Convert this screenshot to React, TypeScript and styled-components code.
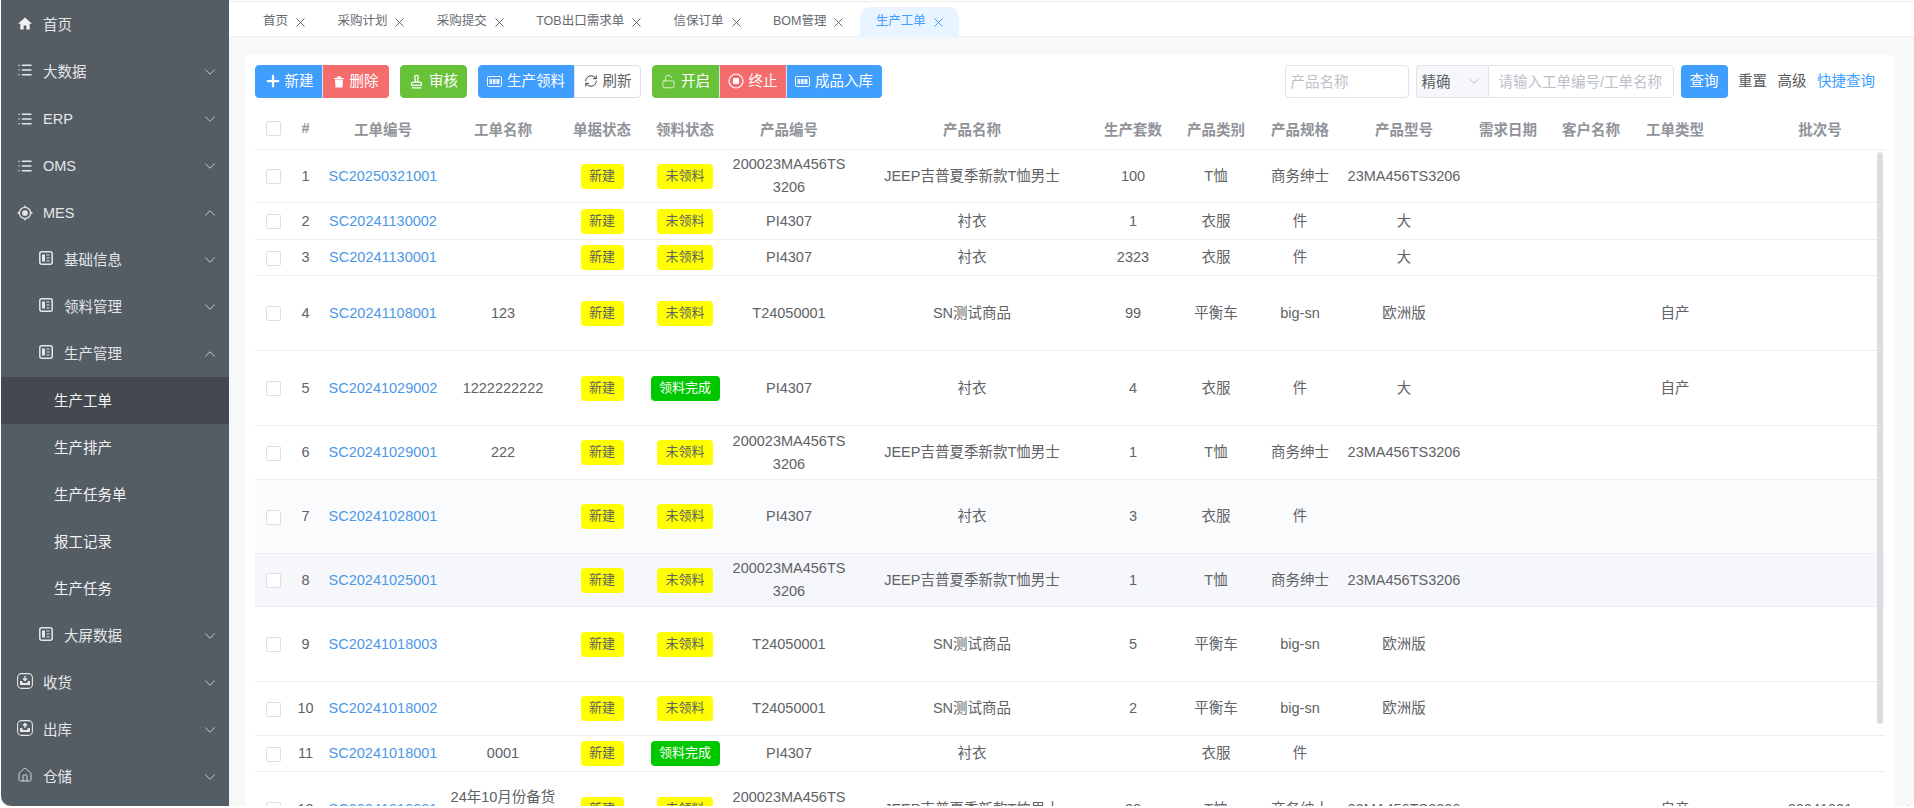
import React from 'react';
import styled, { createGlobalStyle } from 'styled-components';
import { LockOpen, RefreshCw, Home, List, ChevronDown, ChevronUp, Plus, Stamp } from 'lucide-react';

const Global = createGlobalStyle`
  html, body { margin: 0; padding: 0; background: #fff; overflow: hidden; }
  body { font-family: "Liberation Sans", "Noto Sans CJK SC", sans-serif; font-size: 14.5px; color: #606266; }
  * { box-sizing: border-box; }
`;

const Frame = styled.div`
  width: 1913px; height: 806px; margin-left: 1px; display: flex; overflow: hidden;
  border-radius: 0 0 10px 10px; box-shadow: 0 1px 0 #dcdcdc;
`;
const Sidebar = styled.nav`
  width: 228px; flex: none; background: #545c64; padding-top: 1px; color: #e4e6e8; overflow: hidden;
`;
const MenuRow = styled.div<{ $level: number; $active?: boolean; $latin?: boolean }>`
  height: 47px; display: flex; align-items: center; position: relative;
  padding-bottom: ${p => (p.$latin ? 0 : 3)}px;
  padding-left: ${p => (p.$level === 0 ? 16 : p.$level === 1 ? 37 : 53)}px;
  background: ${p => (p.$active ? '#43494f' : 'transparent')};
  color: ${p => (p.$level === 2 ? '#f2f3f4' : '#e4e6e8')};
`;
const MenuIcon = styled.span`
  width: 16px; height: 16px; margin-right: 10px; display: flex; align-items: center; justify-content: center; flex: none;
`;
const Caret = styled.span`
  position: absolute; left: 200px; top: 15px; display: flex; color: #d3d6d9;
`;
const Main = styled.main`flex: 1; min-width: 0; display: flex; flex-direction: column; background: #f7f8f8;`;
const TopLine = styled.div`height: 2px; flex: none; background: linear-gradient(#fff 50%, #ececec 50%);`;
const TabBar = styled.div`
  height: 35px; flex: none; background: #fff; border-bottom: 1px solid #eeeeee; padding: 5px 0 0 17.800px; display: flex; align-items: stretch;
`;
const Tab = styled.div<{ $active?: boolean }>`
  position: relative; display: flex; align-items: center; gap: 8px; padding: 0 16.200px 6px; height: 30px; font-size: 12.5px;
  color: ${p => (p.$active ? '#409eff' : '#666a70')};
  background: ${p => (p.$active ? '#e8f4ff' : 'transparent')};
  border-radius: ${p => (p.$active ? '10px 10px 0 0' : '0')};
  ${p => p.$active && `
    &::before, &::after { content: ''; position: absolute; bottom: 0; width: 4px; height: 5px; }
    &::before { left: -3px; background: radial-gradient(circle at 0 0, transparent 4px, #e8f4ff 4.5px); }
    &::after { right: -3px; background: radial-gradient(circle at 100% 0, transparent 4px, #e8f4ff 4.5px); }
  `}
`;
const CloseSvg = styled.svg`margin-top: 6px; flex: none;`;
const Body = styled.div`flex: 1; min-height: 0; padding: 17px 20px 0 16px; overflow: hidden;`;
const Card = styled.section`height: 100%; background: #fff; border-radius: 6px 6px 0 0; padding: 11px 9px 0 10px; overflow: hidden;`;
const Toolbar = styled.div`display: flex; align-items: center; justify-content: space-between; height: 33px; padding-right: 10px;`;
const Left = styled.div`display: flex; gap: 11px;`;
const Group = styled.div`display: flex;`;
const Btn = styled.button<{ $w: number; $bg: string; $plain?: boolean }>`
  width: ${p => p.$w}px; height: 33px; padding: 0 0 4px; border: 1px solid ${p => (p.$plain ? '#dcdfe6' : p.$bg)};
  background: ${p => p.$bg}; color: ${p => (p.$plain ? '#606266' : '#fff')};
  font: inherit; display: inline-flex; align-items: center; justify-content: center; gap: 5px;
  & + & { border-left-color: ${p => (p.$plain ? '#dcdfe6' : 'rgba(255,255,255,.45)')}; }
  &:first-child { border-radius: 4px 0 0 4px; }
  &:last-child { border-radius: 0 4px 4px 0; }
  &:only-child { border-radius: 4px; }
`;
const PlusIcon = styled(Plus)`margin-right: -2px; margin-top: 3px;`;
const Right = styled.div`display: flex; align-items: center;`;
const Field = styled.div<{ $w: number; $pl?: number; $radius?: string }>`
  width: ${p => p.$w}px; height: 33px; padding: 0 0 2px ${p => p.$pl ?? 5}px;
  border: 1px solid #dfe2e8; border-radius: ${p => p.$radius ?? '4px'}; background: #fff; color: #bcc0c8;
  display: flex; align-items: center; white-space: nowrap; overflow: hidden;
`;
const Select = styled.div`
  width: 72px; height: 33px; margin-left: 7px; padding: 0 5px 2px 5px; border: 1px solid #dfe2e8; border-right: 0;
  border-radius: 4px 0 0 4px; background: #f5f7fa; color: #606266; display: flex; align-items: center; justify-content: space-between;
`;
const Query = styled.button`
  width: 47px; height: 33px; margin-left: 7px; border: 0; border-radius: 4px; background: #409eff; color: #fff; font: inherit; padding: 0 0 4px;
`;
const TextAct = styled.span<{ $link?: boolean }>`
  margin-left: 10.500px; color: ${p => (p.$link ? '#409eff' : '#55585c')}; margin-top: -4px;
`;
const TableWrap = styled.div`position: relative; margin-top: 12px;`;
const Table = styled.table`
  width: 1630px; table-layout: fixed; border-collapse: separate; border-spacing: 0;
`;
const Th = styled.th<{ $pl?: number }>`
  height: 40px; padding: 0 0 3px ${p => p.$pl ?? 0}px; text-align: center; font-weight: 700; color: #909399; border-bottom: 1px solid #ebeef5; white-space: nowrap;
`;
const Tr = styled.tr<{ $bg?: string }>`background: ${p => p.$bg ?? '#fff'};`;
const Td = styled.td<{ $h: number; $pl?: number }>`
  height: ${p => p.$h}px; padding: 0 0 0 ${p => p.$pl ?? 0}px; text-align: center; line-height: 23px; color: #606266; border-bottom: 1px solid #ebeef5; overflow: hidden; word-break: break-all;
`;
const Check = styled.span`
  display: inline-block; width: 15px; height: 15px; border: 1px solid #dcdfe6; border-radius: 2px; background: #fff; vertical-align: middle;
`;
const Link = styled.span`color: #4d98e6; white-space: nowrap;`;
const Tag = styled.span<{ $bg: string; $fg: string; $w: number }>`
  display: inline-block; width: ${p => p.$w}px; height: 25px; line-height: 24px; border-radius: 4px; font-size: 13px; vertical-align: middle;
  background: ${p => p.$bg}; color: ${p => p.$fg}; white-space: nowrap;
`;
const Wrap = styled.div<{ $w: number }>`width: ${p => p.$w}px; margin: 0 auto;`;
const Scroll = styled.div`
  position: absolute; left: 1622px; top: 42px; width: 6px; height: 572px; border-radius: 3px; background: #dcdddf;
`;

const Close = () => (
  <CloseSvg width="9" height="9" viewBox="0 0 9 9" fill="none" stroke="currentColor" strokeWidth="1">
    <path d="M.5.500l8 8M8.500.500l-8 8" />
  </CloseSvg>
);
const HomeFill = () => (
  <svg width="17" height="17" viewBox="0 0 24 24" fill="#f0f1f2"><path d="M12 3 1.500 12.500H5V21h5v-6h4v6h5v-8.500h3.500z" /></svg>
);
const Aim = () => (
  <svg width="16" height="16" viewBox="0 0 16 16" fill="none" stroke="#e4e6e8" strokeWidth="1.300">
    <circle cx="8" cy="8" r="5.600" /><circle cx="8" cy="8" r="2.200" fill="#e4e6e8" />
    <path d="M8 .5v1.500M8 14v1.500M.5 8H2M14 8h1.500" />
  </svg>
);
const PanelIcon = () => (
  <svg width="14" height="14" viewBox="0 0 14 14" fill="none">
    <rect x=".8" y=".8" width="12.400" height="12.400" rx="2" stroke="#e4e6e8" strokeWidth="1.500" />
    <rect x="3" y="3.500" width="3" height="7" fill="#e4e6e8" />
    <path d="M7.500 4h3M7.500 7h3M7.500 10h3" stroke="#e4e6e8" strokeWidth="1.200" />
  </svg>
);
const TrayIcon = ({ up }: { up?: boolean }) => (
  <svg width="16" height="16" viewBox="0 0 16 16" fill="none" stroke="#e4e6e8" strokeWidth="1.100">
    <rect x=".6" y=".6" width="14.800" height="14.800" rx="4" />
    <path d="M3 8v4h10V8l-2 0-1 2H6L5 8z" fill="#e4e6e8" stroke="none" />
    <path d={up ? 'M8 8V3.500M6 5.500l2-2 2 2' : 'M8 3v4.500M6 5.500l2 2 2-2'} strokeWidth="1.300" />
  </svg>
);
const BtnIconSvg = styled.svg`margin-top: 3px; flex: none;`;
const Trash = () => (
  <BtnIconSvg width="12" height="13" viewBox="0 0 12 13" fill="#fff"><path d="M1 3h10v1H1zM4 1.500h4V3H4zM2 4.500h8l-.5 8h-7z" /></BtnIconSvg>
);
const BtnIcon = () => (
  <BtnIconSvg width="15" height="11" viewBox="0 0 15 11" fill="none">
    <rect x=".5" y=".5" width="14" height="10" rx="1.200" stroke="#fff" />
    <rect x="2.500" y="3" width="10" height="5" fill="#fff" opacity=".85" />
    <path d="M5.500 3v5M9 3v5" stroke="#409eff" strokeWidth=".7" />
  </BtnIconSvg>
);
const StopIcon = () => (
  <BtnIconSvg width="16" height="16" viewBox="0 0 16 16" fill="none">
    <circle cx="8" cy="8" r="7" stroke="#fff" strokeWidth="1.200" /><rect x="5" y="5" width="6" height="6" rx="1" fill="#fff" />
  </BtnIconSvg>
);
const StampIcon = styled(Stamp)`margin-top: 3px;`;
const RefreshIcon = styled(RefreshCw)`margin-top: 3px;`;
const LockIcon = styled(LockOpen)`margin-top: 4px;`;

const ListIcon = () => <List size={16} strokeWidth={2.200} />;
const menu: { t: string; l: number; i?: React.ReactNode; c?: string; a?: boolean; latin?: boolean }[] = [
  { t: '首页', l: 0, i: <HomeFill /> },
  { t: '大数据', l: 0, i: <ListIcon />, c: 'd' },
  { t: 'ERP', l: 0, i: <ListIcon />, c: 'd', latin: true },
  { t: 'OMS', l: 0, i: <ListIcon />, c: 'd', latin: true },
  { t: 'MES', l: 0, i: <Aim />, c: 'u', latin: true },
  { t: '基础信息', l: 1, i: <PanelIcon />, c: 'd' },
  { t: '领料管理', l: 1, i: <PanelIcon />, c: 'd' },
  { t: '生产管理', l: 1, i: <PanelIcon />, c: 'u' },
  { t: '生产工单', l: 2, a: true },
  { t: '生产排产', l: 2 },
  { t: '生产任务单', l: 2 },
  { t: '报工记录', l: 2 },
  { t: '生产任务', l: 2 },
  { t: '大屏数据', l: 1, i: <PanelIcon />, c: 'd' },
  { t: '收货', l: 0, i: <TrayIcon />, c: 'd' },
  { t: '出库', l: 0, i: <TrayIcon up />, c: 'd' },
  { t: '仓储', l: 0, i: <Home size={16} strokeWidth={1.300} />, c: 'd' },
];

const tabs = ['首页', '采购计划', '采购提交', 'TOB出口需求单', '信保订单', 'BOM管理', '生产工单'];

const cols: [string, number, number?][] = [
  ['', 36], ['#', 29], ['工单编号', 126], ['工单名称', 114], ['单据状态', 84], ['领料状态', 82], ['产品编号', 126],
  ['产品名称', 240], ['生产套数', 82], ['产品类别', 84], ['产品规格', 84], ['产品型号', 124], ['需求日期', 84],
  ['客户名称', 82], ['工单类型', 86], ['批次号', 167, 37],
];

const J = ['200023MA456TS3206', 'JEEP吉普夏季新款T恤男士'];
const rows: { h: number; id: string; n: string; d: number; p: string; pn: string; q: string; c: string; s: string; m: string; ty: string; b: string; bg?: string }[] = [
  { h: 53, id: 'SC20250321001', n: '', d: 0, p: J[0], pn: J[1], q: '100', c: 'T恤', s: '商务绅士', m: '23MA456TS3206', ty: '', b: '' },
  { h: 37, id: 'SC20241130002', n: '', d: 0, p: 'PI4307', pn: '衬衣', q: '1', c: '衣服', s: '件', m: '大', ty: '', b: '' },
  { h: 36, id: 'SC20241130001', n: '', d: 0, p: 'PI4307', pn: '衬衣', q: '2323', c: '衣服', s: '件', m: '大', ty: '', b: '' },
  { h: 75, id: 'SC20241108001', n: '123', d: 0, p: 'T24050001', pn: 'SN测试商品', q: '99', c: '平衡车', s: 'big-sn', m: '欧洲版', ty: '自产', b: '' },
  { h: 75, id: 'SC20241029002', n: '1222222222', d: 1, p: 'PI4307', pn: '衬衣', q: '4', c: '衣服', s: '件', m: '大', ty: '自产', b: '' },
  { h: 54, id: 'SC20241029001', n: '222', d: 0, p: J[0], pn: J[1], q: '1', c: 'T恤', s: '商务绅士', m: '23MA456TS3206', ty: '', b: '' },
  { h: 74, id: 'SC20241028001', n: '', d: 0, p: 'PI4307', pn: '衬衣', q: '3', c: '衣服', s: '件', m: '', ty: '', b: '', bg: '#fafbfd' },
  { h: 53, id: 'SC20241025001', n: '', d: 0, p: J[0], pn: J[1], q: '1', c: 'T恤', s: '商务绅士', m: '23MA456TS3206', ty: '', b: '', bg: '#f5f7fa' },
  { h: 75, id: 'SC20241018003', n: '', d: 0, p: 'T24050001', pn: 'SN测试商品', q: '5', c: '平衡车', s: 'big-sn', m: '欧洲版', ty: '', b: '' },
  { h: 54, id: 'SC20241018002', n: '', d: 0, p: 'T24050001', pn: 'SN测试商品', q: '2', c: '平衡车', s: 'big-sn', m: '欧洲版', ty: '', b: '' },
  { h: 36, id: 'SC20241018001', n: '0001', d: 1, p: 'PI4307', pn: '衬衣', q: '', c: '衣服', s: '件', m: '', ty: '', b: '' },
  { h: 75, id: 'SC20241010001', n: '24年10月份备货计划', d: 0, p: J[0], pn: J[1], q: '20', c: 'T恤', s: '商务绅士', m: '23MA456TS3206', ty: '自产', b: '20241001' },
];

export default function App() {
  return (
    <>
      <Global />
      <Frame>
        <Sidebar>
          {menu.map(m => (
            <MenuRow key={m.t} $level={m.l} $active={m.a} $latin={m.latin}>
              {m.i && <MenuIcon>{m.i}</MenuIcon>}
              {m.t}
              {m.c && (
                <Caret>
                  {m.c === 'd' ? <ChevronDown size={18} strokeWidth={1.200} /> : <ChevronUp size={18} strokeWidth={1.200} />}
                </Caret>
              )}
            </MenuRow>
          ))}
        </Sidebar>
        <Main>
          <TopLine />
          <TabBar>
            {tabs.map((t, i) => (
              <Tab key={t} $active={i === tabs.length - 1}>
                {t}
                <Close />
              </Tab>
            ))}
          </TabBar>
          <Body>
            <Card>
              <Toolbar>
                <Left>
                  <Group>
                    <Btn $w={67} $bg="#409eff"><PlusIcon size={18} strokeWidth={3} />新建</Btn>
                    <Btn $w={67} $bg="#f56c6c"><Trash />删除</Btn>
                  </Group>
                  <Group>
                    <Btn $w={67} $bg="#67c23a"><StampIcon size={15} strokeWidth={2} />审核</Btn>
                  </Group>
                  <Group>
                    <Btn $w={96} $bg="#409eff"><BtnIcon />生产领料</Btn>
                    <Btn $w={67} $bg="#fff" $plain><RefreshIcon size={14} strokeWidth={1.700} color="#444" />刷新</Btn>
                  </Group>
                  <Group>
                    <Btn $w={67} $bg="#67c23a"><LockIcon size={15} strokeWidth={1.500} color="#dff2c9" />开启</Btn>
                    <Btn $w={67} $bg="#f56c6c"><StopIcon />终止</Btn>
                    <Btn $w={96} $bg="#409eff"><BtnIcon />成品入库</Btn>
                  </Group>
                </Left>
                <Right>
                  <Field $w={124}>产品名称</Field>
                  <Select>精确<ChevronDown size={18} strokeWidth={1.100} color="#b0b4bc" /></Select>
                  <Field $w={186} $pl={10} $radius="0 4px 4px 0">请输入工单编号/工单名称</Field>
                  <Query>查询</Query>
                  <TextAct>重置</TextAct>
                  <TextAct>高级</TextAct>
                  <TextAct $link>快捷查询</TextAct>
                </Right>
              </Toolbar>
              <TableWrap>
                <Table>
                  <colgroup>{cols.map((c, i) => <col key={i} style={{ width: c[1] }} />)}</colgroup>
                  <thead>
                    <tr>
                      {cols.map((c, i) => (
                        <Th key={i} $pl={c[2]}>{i === 0 ? <Check /> : c[0]}</Th>
                      ))}
                    </tr>
                  </thead>
                  <tbody>
                    {rows.map((r, i) => (
                      <Tr key={r.id} $bg={r.bg}>
                        <Td $h={r.h}><Check /></Td>
                        <Td $h={r.h}>{i + 1}</Td>
                        <Td $h={r.h}><Link>{r.id}</Link></Td>
                        <Td $h={r.h}><Wrap $w={110}>{r.n}</Wrap></Td>
                        <Td $h={r.h}><Tag $w={43} $bg="#ffff00" $fg="#606266">新建</Tag></Td>
                        <Td $h={r.h}>
                          {r.d
                            ? <Tag $w={69} $bg="#00c800" $fg="#fff">领料完成</Tag>
                            : <Tag $w={56} $bg="#ffff00" $fg="#606266">未领料</Tag>}
                        </Td>
                        <Td $h={r.h}><Wrap $w={116}>{r.p}</Wrap></Td>
                        <Td $h={r.h}>{r.pn}</Td>
                        <Td $h={r.h}>{r.q}</Td>
                        <Td $h={r.h}>{r.c}</Td>
                        <Td $h={r.h}>{r.s}</Td>
                        <Td $h={r.h}>{r.m}</Td>
                        <Td $h={r.h} />
                        <Td $h={r.h} />
                        <Td $h={r.h}>{r.ty}</Td>
                        <Td $h={r.h} $pl={37}>{r.b}</Td>
                      </Tr>
                    ))}
                  </tbody>
                </Table>
                <Scroll />
              </TableWrap>
            </Card>
          </Body>
        </Main>
      </Frame>
    </>
  );
}
